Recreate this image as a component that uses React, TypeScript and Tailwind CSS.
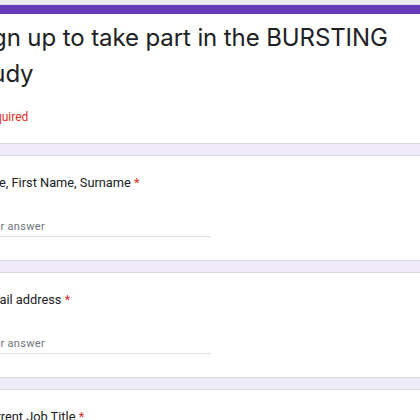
export default function App() {
  const questions = ['Title, First Name, Surname', 'Email address', 'Current Job Title'];

  return (
    <div className="w-[420px] h-[420px] overflow-hidden bg-[#f0ebf8] text-[#202124] font-['Roboto',sans-serif]">
      <div className="ml-[-44px] w-[520px] pt-[4px] flex flex-col gap-[11px]">
        {/* header card */}
        <div className="bg-white border border-[#dadce0] rounded-lg overflow-hidden">
          <div className="h-[9px] bg-[#673ab7]" />
          <div className="px-6 pt-[6px] pb-[18px]">
            <h1 className="-ml-[10px] w-[440px] text-[24px] leading-[36px] tracking-[-0.1px] font-['Inter',sans-serif]">
              Sign up to take part in the BURSTING study
            </h1>
            <div className="mt-[17px] -ml-[8px] text-[12px] leading-[16px] text-[#d93025]">* Required</div>
          </div>
        </div>

        {questions.map((q) => (
          <div key={q} className="bg-white border border-[#dadce0] rounded-lg px-6 pt-[17px] pb-[23px]">
            <div className="text-[12.8px] leading-[20px]">
              {q} <span className="text-[#d93025]">*</span>
            </div>
            <div className="mt-[26px] w-[230px] pb-[1px] border-b border-[#e0e0e0] text-[11px] leading-[16px] tracking-[0.3px] text-[#70757a]">
              Your answer
            </div>
          </div>
        ))}
      </div>
    </div>
  );
}
